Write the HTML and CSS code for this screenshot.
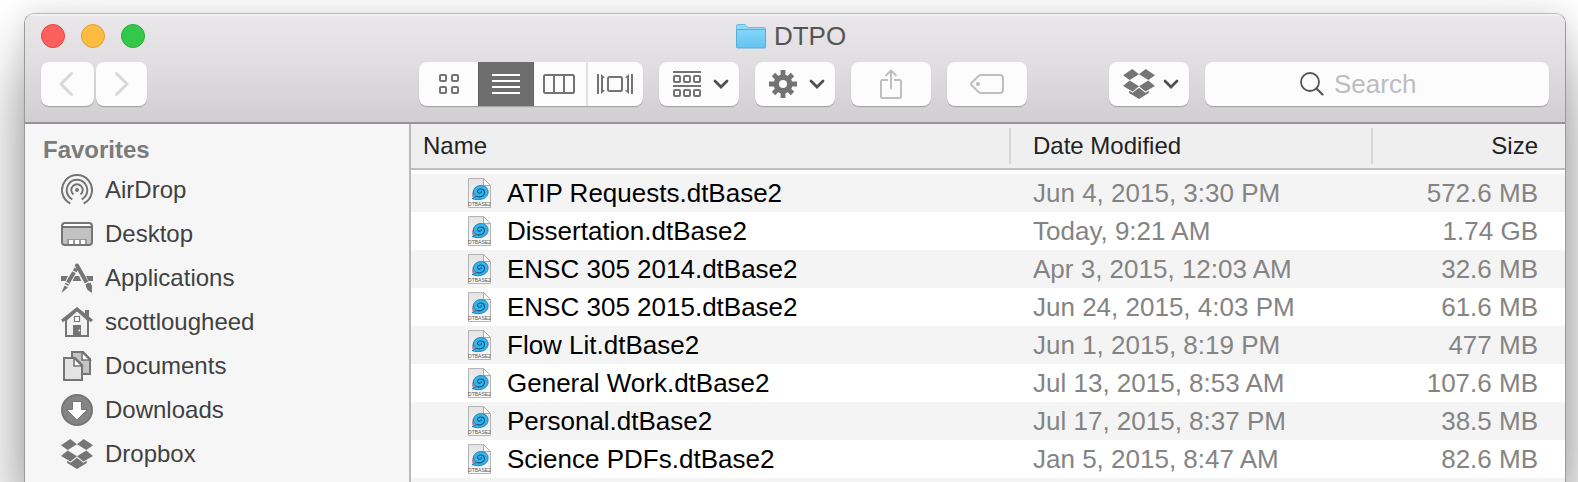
FILE: index.html
```html
<!DOCTYPE html>
<html lang="en">
<head>
<meta charset="utf-8">
<title>DTPO</title>
<link rel="stylesheet" href="styles.css">
</head>
<body>
<svg class="defs" width="0" height="0" aria-hidden="true">
  <defs>
    <linearGradient id="folder-front" x1="0" y1="0" x2="0" y2="1"><stop offset="0" stop-color="#86d5fa"/><stop offset="1" stop-color="#62c3f2"/></linearGradient>
    <linearGradient id="page-fill" x1="0" y1="0" x2="0" y2="1"><stop offset="0" stop-color="#e4e4e4"/><stop offset="1" stop-color="#fbfbfb"/></linearGradient>
    <symbol id="chevron" viewBox="0 0 16 10"><path d="M2 2l6 6 6-6" fill="none" stroke="#505050" stroke-width="2.8" stroke-linecap="round" stroke-linejoin="miter"/></symbol>
    <symbol id="dropbox" viewBox="0 0 32 30">
      <path fill="#757575" d="M9.300 0L16 5.200 6.700 11 0 6.200zM22.700 0L32 6.200 25.300 11 16 5.200zM0 17L6.700 11.600 16 17.200 9.500 22.500zM25.300 11.600L32 17 22.500 22.500 16 17.200zM16 18.800l6.400 5 3.400-2v2.200L16 30l-9.800-6v-2.200l3.400 2z"/>
    </symbol>
    <symbol id="file" viewBox="0 0 23 30">
      <path d="M.5.500h15l7 7v22H.500z" fill="url(#page-fill)" stroke="#b3b3b3"/>
      <path d="M15.500.500v7h7z" fill="#fff" stroke="#aaa"/>
      <path d="M5.500 12C3.500 15 3.500 18.500 5.500 20.500c3 1.500 6 1 9-1" fill="#a58aa0"/>
      <path d="M4 20.500c3 1.500 7.500 1.500 10.500.500 4.500-1.500 6-5 5.500-8.200C19.200 9 16 7.200 12 7.600c-4 .400-6.700 3.400-6.500 6.400.100 2 1.300 3.500 3 4.500-1.500 1-3 1.600-4.500 2z" fill="#33b5ea" stroke="#1a6da3" stroke-width=".8"/>
      <path d="M8.500 18.500c4 1 8-.5 8-4 0-2.500-2-3.700-4.200-3.500-1.900.200-3 1.500-2.700 2.900.400 1.200 2 1.700 3.100 1 .700-.500.800-1.200.200-1.700" fill="none" stroke="#124f80" stroke-width="1.100"/>
      <text x="11.500" y="28" text-anchor="middle" class="file-tag">DTBASE2</text>
    </symbol>
  </defs>
</svg>

<div class="window">
  <header class="toolbar">
    <div class="titlebar">
      <div class="lights">
        <button class="light close" aria-label="Close"></button>
        <button class="light minimize" aria-label="Minimize"></button>
        <button class="light zoom" aria-label="Zoom"></button>
      </div>
      <h1 class="title">
        <svg width="30" height="25" viewBox="0 0 30 25" aria-hidden="true">
          <path d="M.5 22V2q0-1.500 1.500-1.500h7l3 3h16.500q1 0 1 1V22z" fill="#8ed9fa" stroke="#70bce0"/>
          <path d="M.5 5.500h29V23q0 1-1 1h-27q-1 0-1-1z" fill="url(#folder-front)" stroke="#5aaed6"/>
        </svg>
        <span>DTPO</span>
      </h1>
    </div>
    <div class="controls">
      <div class="nav">
        <button class="button back" aria-label="Back"><svg width="14" height="24" viewBox="0 0 14 24"><path d="M12.500 1.500L2 12l10.500 10.500" class="faint"/></svg></button>
        <button class="button forward" aria-label="Forward"><svg width="14" height="24" viewBox="0 0 14 24"><path d="M1.500 1.500L12 12 1.500 22.500" class="faint"/></svg></button>
      </div>
      <div class="views">
        <button class="view icons" aria-label="Icon view">
          <svg width="20" height="20" viewBox="0 0 20 20" class="line"><rect x="1" y="1" width="6" height="6" rx="1"/><rect x="13" y="1" width="6" height="6" rx="1"/><rect x="1" y="13" width="6" height="6" rx="1"/><rect x="13" y="13" width="6" height="6" rx="1"/></svg>
        </button>
        <button class="view list" aria-label="List view" aria-pressed="true">
          <svg width="28" height="20" viewBox="0 0 28 20"><path d="M0 1h28M0 7h28M0 13h28M0 19h28" stroke="#fff" stroke-width="2"/></svg>
        </button>
        <button class="view columns" aria-label="Column view">
          <svg width="32" height="20" viewBox="0 0 32 20" class="line"><rect x="1" y="1" width="30" height="18" rx="1.500"/><path d="M11 1v18M21 1v18"/></svg>
        </button>
        <button class="view flow" aria-label="Cover Flow view">
          <svg width="36" height="20" viewBox="0 0 36 20" class="line"><rect x="11" y="3" width="14" height="14" rx="1.500"/><path d="M1 0v20M35 0v20"/><path d="M4 0l4 3.500-2 .5v12l2 .5L4 20zM32 0l-4 3.500 2 .5v12l-2 .5 4 3.500z" fill="#737373" stroke="none"/></svg>
        </button>
      </div>
      <button class="button menu" aria-label="Arrange">
        <svg width="28" height="26" viewBox="0 0 28 26" class="line"><path d="M0 1h28M0 15h28"/><rect x="1" y="5" width="6" height="6" rx="1"/><rect x="11" y="5" width="6" height="6" rx="1"/><rect x="21" y="5" width="6" height="6" rx="1"/><rect x="1" y="19" width="6" height="6" rx="1"/><rect x="11" y="19" width="6" height="6" rx="1"/><rect x="21" y="19" width="6" height="6" rx="1"/></svg>
        <svg width="16" height="10"><use href="#chevron"/></svg>
      </button>
      <button class="button menu" aria-label="Action">
        <svg width="28" height="28" viewBox="0 0 28 28"><path d="M14 0v28M0 14h28M4.500 4.500l19 19M23.500 4.500l-19 19" stroke="#737373" stroke-width="4.800"/><circle cx="14" cy="14" r="9.500" fill="#737373"/><circle cx="14" cy="14" r="4" fill="#fcfcfc"/></svg>
        <svg width="16" height="10"><use href="#chevron"/></svg>
      </button>
      <button class="button wide" aria-label="Share">
        <svg width="22" height="30" viewBox="0 0 22 30" class="pale"><path d="M8 11H2.500Q1 11 1 12.500v15Q1 29 2.500 29h17q1.500 0 1.500-1.500v-15Q21 11 19.500 11H14M11 20V2M5.500 7L11 1.500 16.500 7"/></svg>
      </button>
      <button class="button wide" aria-label="Edit tags">
        <svg width="34" height="20" viewBox="0 0 34 20" class="pale"><path d="M11 1h19q3 0 3 3v12q0 3-3 3H11q-1.500 0-2.500-1L1.500 11q-1-1 0-2l7-7q1-1 2.500-1z"/><circle cx="8" cy="10" r="1.100"/></svg>
      </button>
      <button class="button menu extra" aria-label="Dropbox">
        <svg width="32" height="30"><use href="#dropbox"/></svg>
        <svg width="16" height="10"><use href="#chevron"/></svg>
      </button>
      <label class="search">
        <svg width="24" height="24" viewBox="0 0 24 24" aria-hidden="true"><circle cx="10" cy="10" r="9" fill="none" stroke="#555" stroke-width="1.800"/><path d="M16.500 16.500l6 6" stroke="#555" stroke-width="2.200" stroke-linecap="round"/></svg>
        <input type="search" placeholder="Search" aria-label="Search">
      </label>
    </div>
  </header>

  <div class="content">
    <nav class="sidebar" aria-labelledby="favorites">
      <h2 id="favorites">Favorites</h2>
      <a href="#"><svg width="32" height="32" viewBox="0 0 32 32" fill="none" stroke="#757575" stroke-width="2"><path d="M9.300 29.500a15 15 0 1113.400 0M11.300 25.300a10.300 10.300 0 119.400 0M12.500 20.500a5.700 5.700 0 117 0"/><circle cx="16" cy="16" r="2" fill="#757575" stroke="none"/></svg>AirDrop</a>
      <a href="#"><svg width="32" height="24" viewBox="0 0 32 24"><rect x="1" y="1" width="30" height="22" rx="3" fill="#c2c2c2" stroke="#757575" stroke-width="2"/><path d="M3.500 2h25l1.500 2H2z" fill="#fff"/><path d="M1 5h30" stroke="#757575" stroke-width="2"/><path d="M6 22v-5h20v5z" fill="#999"/><path d="M8 18h4v4H8zM14 18h4v4h-4zM20 18h4v4h-4z" fill="#fff"/></svg>Desktop</a>
      <a href="#"><svg width="32" height="30" viewBox="0 0 32 30"><path d="M0 13h7l-2.500 5H0zM14 13h4l2.500 5h-9zM25 13h7v5h-4.500z" fill="#757575"/><path d="M16 2.500L27 22" stroke="#757575" stroke-width="4" stroke-linecap="round"/><path d="M24.500 22.500l5-3 1.500 3.500v7l-4.500-3z" fill="#757575"/><path d="M15.300 5.500L5.500 22" stroke="#757575" stroke-width="4"/><path d="M3.500 22.500l3.500 2L.5 30z" fill="#757575"/><path d="M11 7.500l4.500 2.500M8 21l-4-2.200M24 21l4.500-2.500" stroke="#f6f6f6" stroke-width="1.200"/></svg>Applications</a>
      <a href="#"><svg width="32" height="30" viewBox="0 0 32 30"><path d="M24 3h4v9h-4z" fill="#757575"/><path d="M5 13v16h22V13L16 3z" fill="#f2f2f2" stroke="#757575" stroke-width="2"/><path d="M1 14L16 2l15 12" fill="none" stroke="#757575" stroke-width="3"/><path d="M12 18h8v11h-8z" fill="#757575"/><path d="M13.500 9.500h5v5h-5z" fill="#fff" stroke="#757575" stroke-width="1.200"/><circle cx="18.300" cy="23.500" r=".9" fill="#fff"/></svg>scottlougheed</a>
      <a href="#"><svg width="32" height="30" viewBox="0 0 32 30" stroke="#757575" stroke-width="2"><path d="M11 1h11l7 7v15H11z" fill="#c4c4c4"/><path d="M21 1v8h8z" fill="#fff" stroke-width="1.600"/><path d="M3 7h11l7 7v15H3z" fill="#e4e4e4"/><path d="M13 7v8h8z" fill="#fff" stroke-width="1.600"/></svg>Documents</a>
      <a href="#"><svg width="32" height="32" viewBox="0 0 32 32"><circle cx="16" cy="16" r="15" fill="#858585" stroke="#757575" stroke-width="2"/><path d="M11.500 7.500h9v8h6L16 26 5.500 15.500h6z" fill="#fff" stroke="#757575" stroke-width="1"/></svg>Downloads</a>
      <a href="#"><svg width="32" height="30"><use href="#dropbox"/></svg>Dropbox</a>
    </nav>
    <main class="files">
      <table>
        <colgroup><col><col class="col-date"><col class="col-size"></colgroup>
        <thead>
          <tr><th scope="col" class="name">Name</th><th scope="col" class="date">Date Modified</th><th scope="col" class="size">Size</th></tr>
        </thead>
        <tbody>
          <tr><td><div class="file"><svg width="23" height="30"><use href="#file"/></svg>ATIP Requests.dtBase2</div></td><td class="date">Jun 4, 2015, 3:30 PM</td><td class="size">572.6 MB</td></tr>
          <tr><td><div class="file"><svg width="23" height="30"><use href="#file"/></svg>Dissertation.dtBase2</div></td><td class="date">Today, 9:21 AM</td><td class="size">1.74 GB</td></tr>
          <tr><td><div class="file"><svg width="23" height="30"><use href="#file"/></svg>ENSC 305 2014.dtBase2</div></td><td class="date">Apr 3, 2015, 12:03 AM</td><td class="size">32.6 MB</td></tr>
          <tr><td><div class="file"><svg width="23" height="30"><use href="#file"/></svg>ENSC 305 2015.dtBase2</div></td><td class="date">Jun 24, 2015, 4:03 PM</td><td class="size">61.6 MB</td></tr>
          <tr><td><div class="file"><svg width="23" height="30"><use href="#file"/></svg>Flow Lit.dtBase2</div></td><td class="date">Jun 1, 2015, 8:19 PM</td><td class="size">477 MB</td></tr>
          <tr><td><div class="file"><svg width="23" height="30"><use href="#file"/></svg>General Work.dtBase2</div></td><td class="date">Jul 13, 2015, 8:53 AM</td><td class="size">107.6 MB</td></tr>
          <tr><td><div class="file"><svg width="23" height="30"><use href="#file"/></svg>Personal.dtBase2</div></td><td class="date">Jul 17, 2015, 8:37 PM</td><td class="size">38.5 MB</td></tr>
          <tr><td><div class="file"><svg width="23" height="30"><use href="#file"/></svg>Science PDFs.dtBase2</div></td><td class="date">Jan 5, 2015, 8:47 AM</td><td class="size">82.6 MB</td></tr>
          <tr><td><div class="file"><svg width="23" height="30"><use href="#file"/></svg></div></td><td class="date"></td><td class="size"></td></tr>
        </tbody>
      </table>
    </main>
  </div>
</div>
</body>
</html>
```
FILE: styles.css
```css
* { box-sizing: border-box; }

body {
  margin: 0;
  height: 100vh;
  padding: 13px 12px 0 24px;
  overflow: hidden;
  background: #fff;
  color: #000;
  font-family: "Liberation Sans", Arial, sans-serif;
  font-size: 26px;
}

.defs { position: absolute; }
svg { display: block; flex: none; }
button { margin: 0; padding: 0; border: 0; font: inherit; }

.window {
  display: flex;
  flex-direction: column;
  height: 100%;
  border: 1px solid #999;
  border-top-color: #bbb;
  border-bottom: 0;
  border-radius: 10px 10px 0 0;
  overflow: hidden;
  box-shadow: 0 50px 70px rgba(0, 0, 0, 0.4), 0 0 30px rgba(0, 0, 0, 0.12);
}

.toolbar {
  flex: none;
  padding: 0 16px 16px;
  border-bottom: 2px solid #959395;
  background: linear-gradient(#e9e7ea, #dfdde0 50%, #d0ced0);
  box-shadow: inset 0 2px 0 #f2f1f2;
}

.titlebar {
  display: grid;
  grid-template-columns: 1fr auto 1fr;
  align-items: center;
  height: 44px;
}

.lights { display: flex; gap: 16px; }
.light { width: 24px; height: 24px; border: 1px solid; border-radius: 50%; }
.close { background: #fc605c; border-color: #e2443f; }
.minimize { background: #fdbc40; border-color: #dfa033; }
.zoom { background: #34c84a; border-color: #27aa35; }

.title {
  display: flex;
  align-items: center;
  gap: 8px;
  margin: 0 8px 0 0;
  color: #555;
  font-size: 26px;
  font-weight: 400;
}

.controls { display: flex; align-items: center; gap: 16px; padding-top: 4px; }

.nav { display: flex; gap: 2px; margin-right: auto; }

.button {
  display: flex;
  align-items: center;
  justify-content: center;
  flex: none;
  height: 44px;
  border-radius: 8px;
  background: #fcfcfc;
  box-shadow: 0 1px 1px rgba(0, 0, 0, 0.25);
}
.back { width: 53px; padding-right: 4px; }
.forward { width: 51px; }
.menu { width: 80px; justify-content: space-between; padding: 0 10px 0 14px; }
.wide { width: 80px; }
.extra { margin-left: 66px; }

.faint { fill: none; stroke: #d8d8d8; stroke-width: 3; stroke-linecap: round; stroke-linejoin: round; }
.line { fill: none; stroke: #737373; stroke-width: 2; }
.pale { fill: none; stroke: #bfbfbf; stroke-width: 2; }

.views {
  display: flex;
  flex: none;
  height: 44px;
  border-radius: 8px;
  overflow: hidden;
  background: #fcfcfc;
  box-shadow: 0 1px 1px rgba(0, 0, 0, 0.25);
}
.view { display: flex; align-items: center; justify-content: center; background: none; }
.icons { width: 59px; }
.list { width: 56px; background: #6e6e6e; border: 1px solid #626262; border-width: 0 1px; }
.columns { width: 54px; padding-right: 2px; border-right: 2px solid #e2e2e2; }
.flow { width: 55px; padding-right: 2px; }

.search {
  display: flex;
  align-items: center;
  justify-content: center;
  gap: 10px;
  width: 344px;
  height: 44px;
  border-radius: 8px;
  background: #fcfcfc;
  box-shadow: 0 1px 1px rgba(0, 0, 0, 0.25);
}
.search input {
  appearance: none;
  width: 120px;
  padding: 0;
  border: 0;
  outline: 0;
  background: none;
  color: #444;
  font: inherit;
}
.search input::placeholder { color: #bdbdbd; }

.content { display: flex; flex: 1; min-height: 0; }

.sidebar {
  flex: none;
  width: 386px;
  padding: 8px 0 0 18px;
  overflow: hidden;
  border-right: 2px solid #b9b9b9;
  background: #f6f6f6;
  font-size: 24px;
}
.sidebar h2 { margin: 0; color: #7b7b7b; font-size: 24px; line-height: 36px; }
.sidebar a {
  display: flex;
  align-items: center;
  gap: 12px;
  height: 44px;
  padding-left: 18px;
  color: #414141;
  text-decoration: none;
}

.files { flex: 1; min-width: 0; overflow: hidden; background: #fff; }
.files table { width: 100%; table-layout: fixed; border-collapse: separate; border-spacing: 0; }
.col-date { width: 362px; }
.col-size { width: 194px; }

th, td { padding: 0; text-align: left; white-space: nowrap; }
th {
  height: 46px;
  border-bottom: 2px solid #bfbfbf;
  background: #efefef;
  color: #222;
  font-size: 24px;
  font-weight: 400;
}
th.name { padding-left: 12px; }
th.date, th.size {
  background: linear-gradient(#d6d6d6, #d6d6d6) 0 4px / 2px 36px no-repeat #efefef;
}
.date { padding-left: 24px; }
.size { padding-right: 27px; text-align: right; }

tbody::before { content: ""; display: table-row; height: 4px; }
tbody tr { height: 38px; }
tbody tr:nth-child(odd) { background: #f4f4f4; }
td.date, td.size { color: #848484; }

.file { display: flex; align-items: center; gap: 16px; height: 38px; padding-left: 57px; }
.file-tag { fill: #555; font-size: 5px; }
```
